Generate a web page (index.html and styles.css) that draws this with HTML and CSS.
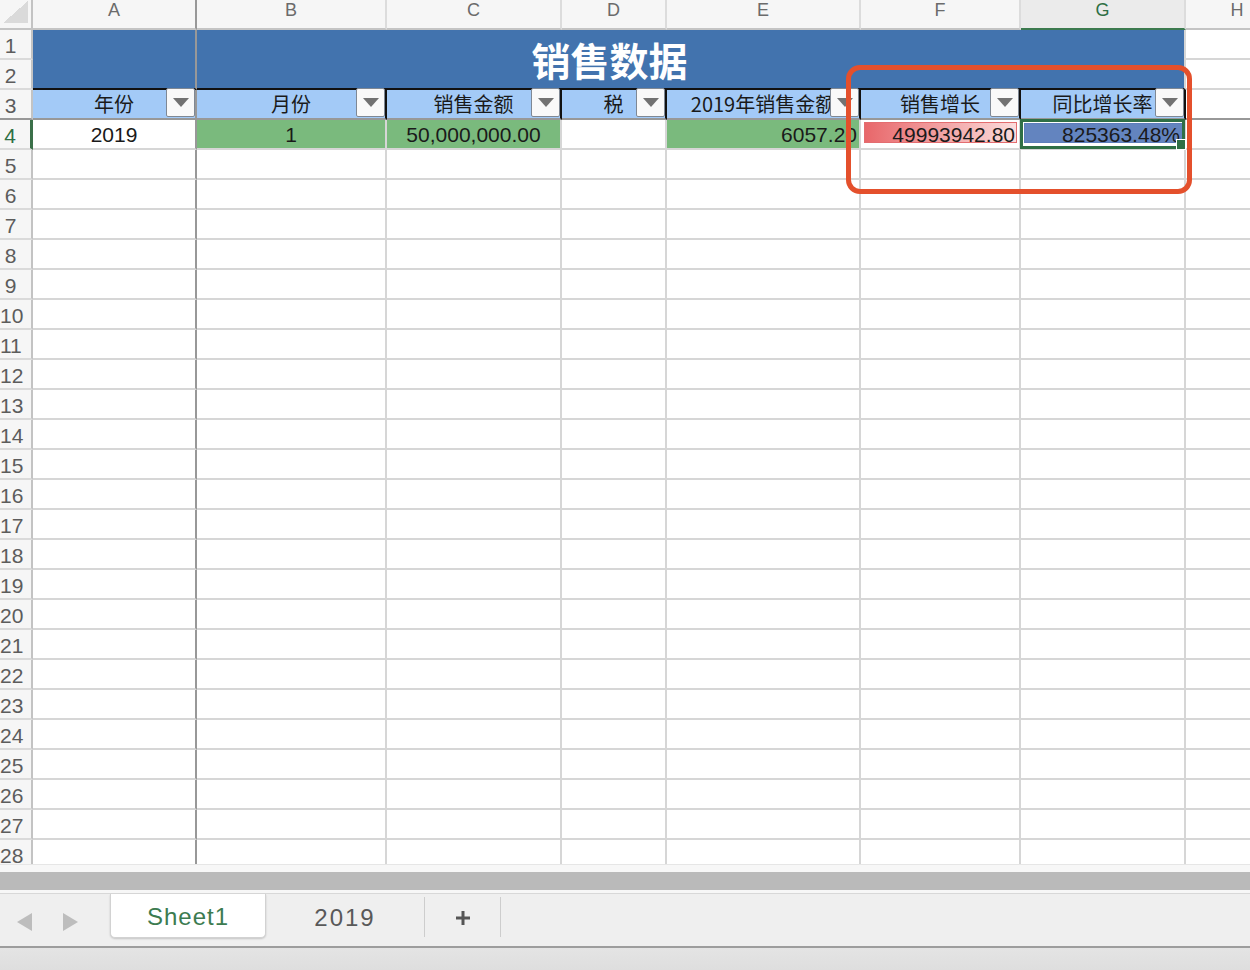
FILE: index.html
```html
<!DOCTYPE html>
<html lang="zh-CN">
<head>
  <meta charset="UTF-8">
  <meta name="viewport" content="width=device-width, initial-scale=1.0">
  <title>销售数据 - Sheet1</title>
  <link rel="stylesheet" href="styles.css">
</head>
<body>
  <div class="workbook">
    <div class="sheet">
      <!-- column letters -->
      <div class="row col-heads">
        <div class="corner"><span class="select-all"></span></div>
        <div class="col-head frozen">A</div>
        <div class="col-head">B</div>
        <div class="col-head">C</div>
        <div class="col-head">D</div>
        <div class="col-head">E</div>
        <div class="col-head">F</div>
        <div class="col-head active">G</div>
        <div class="col-head">H</div>
      </div>

      <!-- rows 1-2: merged title A1:G2 -->
      <div class="row title-rows">
        <div class="rh r1">1</div>
        <div class="rh r2">2</div>
        <div class="cell frozen title-a"></div>
        <div class="cell title">销售数据</div>
        <div class="cell h1"></div>
        <div class="cell h2"></div>
      </div>

      <!-- row 3: table header with filters -->
      <div class="row head-row">
        <div class="rh">3</div>
        <div class="cell th frozen">年份<span class="filter"></span></div>
        <div class="cell th">月份<span class="filter"></span></div>
        <div class="cell th">销售金额<span class="filter"></span></div>
        <div class="cell th">税<span class="filter"></span></div>
        <div class="cell th">2019年销售金额<span class="filter"></span></div>
        <div class="cell th">销售增长<span class="filter"></span></div>
        <div class="cell th">同比增长率<span class="filter"></span></div>
        <div class="cell"></div>
      </div>

      <!-- row 4: data -->
      <div class="row data-row">
        <div class="rh current">4</div>
        <div class="cell frozen center">2019</div>
        <div class="cell fill center">1</div>
        <div class="cell fill center">50,000,000.00</div>
        <div class="cell"></div>
        <div class="cell fill num">6057.20</div>
        <div class="cell"><div class="databar red">49993942.80</div></div>
        <div class="cell selected">
          <div class="databar blue">825363.48%</div>
          <span class="selection"></span>
        </div>
        <div class="cell"></div>
      </div>

      <div class="row"><div class="rh">5</div><div class="cell frozen"></div><div class="cell"></div><div class="cell"></div><div class="cell"></div><div class="cell"></div><div class="cell"></div><div class="cell"></div><div class="cell"></div></div>
      <div class="row"><div class="rh">6</div><div class="cell frozen"></div><div class="cell"></div><div class="cell"></div><div class="cell"></div><div class="cell"></div><div class="cell"></div><div class="cell"></div><div class="cell"></div></div>
      <div class="row"><div class="rh">7</div><div class="cell frozen"></div><div class="cell"></div><div class="cell"></div><div class="cell"></div><div class="cell"></div><div class="cell"></div><div class="cell"></div><div class="cell"></div></div>
      <div class="row"><div class="rh">8</div><div class="cell frozen"></div><div class="cell"></div><div class="cell"></div><div class="cell"></div><div class="cell"></div><div class="cell"></div><div class="cell"></div><div class="cell"></div></div>
      <div class="row"><div class="rh">9</div><div class="cell frozen"></div><div class="cell"></div><div class="cell"></div><div class="cell"></div><div class="cell"></div><div class="cell"></div><div class="cell"></div><div class="cell"></div></div>
      <div class="row"><div class="rh">10</div><div class="cell frozen"></div><div class="cell"></div><div class="cell"></div><div class="cell"></div><div class="cell"></div><div class="cell"></div><div class="cell"></div><div class="cell"></div></div>
      <div class="row"><div class="rh">11</div><div class="cell frozen"></div><div class="cell"></div><div class="cell"></div><div class="cell"></div><div class="cell"></div><div class="cell"></div><div class="cell"></div><div class="cell"></div></div>
      <div class="row"><div class="rh">12</div><div class="cell frozen"></div><div class="cell"></div><div class="cell"></div><div class="cell"></div><div class="cell"></div><div class="cell"></div><div class="cell"></div><div class="cell"></div></div>
      <div class="row"><div class="rh">13</div><div class="cell frozen"></div><div class="cell"></div><div class="cell"></div><div class="cell"></div><div class="cell"></div><div class="cell"></div><div class="cell"></div><div class="cell"></div></div>
      <div class="row"><div class="rh">14</div><div class="cell frozen"></div><div class="cell"></div><div class="cell"></div><div class="cell"></div><div class="cell"></div><div class="cell"></div><div class="cell"></div><div class="cell"></div></div>
      <div class="row"><div class="rh">15</div><div class="cell frozen"></div><div class="cell"></div><div class="cell"></div><div class="cell"></div><div class="cell"></div><div class="cell"></div><div class="cell"></div><div class="cell"></div></div>
      <div class="row"><div class="rh">16</div><div class="cell frozen"></div><div class="cell"></div><div class="cell"></div><div class="cell"></div><div class="cell"></div><div class="cell"></div><div class="cell"></div><div class="cell"></div></div>
      <div class="row"><div class="rh">17</div><div class="cell frozen"></div><div class="cell"></div><div class="cell"></div><div class="cell"></div><div class="cell"></div><div class="cell"></div><div class="cell"></div><div class="cell"></div></div>
      <div class="row"><div class="rh">18</div><div class="cell frozen"></div><div class="cell"></div><div class="cell"></div><div class="cell"></div><div class="cell"></div><div class="cell"></div><div class="cell"></div><div class="cell"></div></div>
      <div class="row"><div class="rh">19</div><div class="cell frozen"></div><div class="cell"></div><div class="cell"></div><div class="cell"></div><div class="cell"></div><div class="cell"></div><div class="cell"></div><div class="cell"></div></div>
      <div class="row"><div class="rh">20</div><div class="cell frozen"></div><div class="cell"></div><div class="cell"></div><div class="cell"></div><div class="cell"></div><div class="cell"></div><div class="cell"></div><div class="cell"></div></div>
      <div class="row"><div class="rh">21</div><div class="cell frozen"></div><div class="cell"></div><div class="cell"></div><div class="cell"></div><div class="cell"></div><div class="cell"></div><div class="cell"></div><div class="cell"></div></div>
      <div class="row"><div class="rh">22</div><div class="cell frozen"></div><div class="cell"></div><div class="cell"></div><div class="cell"></div><div class="cell"></div><div class="cell"></div><div class="cell"></div><div class="cell"></div></div>
      <div class="row"><div class="rh">23</div><div class="cell frozen"></div><div class="cell"></div><div class="cell"></div><div class="cell"></div><div class="cell"></div><div class="cell"></div><div class="cell"></div><div class="cell"></div></div>
      <div class="row"><div class="rh">24</div><div class="cell frozen"></div><div class="cell"></div><div class="cell"></div><div class="cell"></div><div class="cell"></div><div class="cell"></div><div class="cell"></div><div class="cell"></div></div>
      <div class="row"><div class="rh">25</div><div class="cell frozen"></div><div class="cell"></div><div class="cell"></div><div class="cell"></div><div class="cell"></div><div class="cell"></div><div class="cell"></div><div class="cell"></div></div>
      <div class="row"><div class="rh">26</div><div class="cell frozen"></div><div class="cell"></div><div class="cell"></div><div class="cell"></div><div class="cell"></div><div class="cell"></div><div class="cell"></div><div class="cell"></div></div>
      <div class="row"><div class="rh">27</div><div class="cell frozen"></div><div class="cell"></div><div class="cell"></div><div class="cell"></div><div class="cell"></div><div class="cell"></div><div class="cell"></div><div class="cell"></div></div>
      <div class="row"><div class="rh">28</div><div class="cell frozen"></div><div class="cell"></div><div class="cell"></div><div class="cell"></div><div class="cell"></div><div class="cell"></div><div class="cell"></div><div class="cell"></div></div>

      <!-- highlight drawn over F2:G5 -->
      <div class="callout"></div>
    </div>

    <div class="scroll-area">
      <div class="hscroll-thumb"></div>
    </div>

    <div class="tabbar">
      <div class="tab-nav">
        <svg class="nav-arrow" viewBox="0 0 15 18"><polygon points="15,0 15,18 0,9"/></svg>
        <svg class="nav-arrow" viewBox="0 0 15 18"><polygon points="0,0 15,9 0,18"/></svg>
      </div>
      <div class="tab active">Sheet1</div>
      <div class="tab divided">2019</div>
      <div class="tab divided add">
        <svg class="plus" viewBox="0 0 16 16"><line x1="8" y1="1" x2="8" y2="15"/><line x1="1" y1="8" x2="15" y2="8"/></svg>
      </div>
    </div>

    <div class="statusbar"></div>
  </div>
</body>
</html>
```

FILE: styles.css
```css
:root {
  --cols: 33px 164px 190px 175px 105px 194px 160px 165px 104px;
  --grid-line: #d6d6d6;
  --freeze-line: #989898;
  --header-bg: #f6f6f6;
  --title-blue: #4273ae;
  --head-blue: #a3caf7;
  --fill-green: #7aba7d;
  --excel-green: #2f6f45;
  --callout: #e4502c;
}

* {
  box-sizing: border-box;
}

body {
  margin: 0;
  font-family: "Liberation Sans", "Noto Sans CJK SC", sans-serif;
  color: #1a1a1a;
  background: #fff;
}

.workbook {
  width: 1250px;
  height: 970px;
  display: flex;
  flex-direction: column;
  overflow: hidden;
}

/* Grid */
.sheet {
  position: relative;
  height: 864px;
  flex-shrink: 0;
  overflow: hidden;
}

.row {
  display: grid;
  grid-template-columns: var(--cols);
  grid-auto-rows: 30px;
}

.cell {
  border-right: 2px solid var(--grid-line);
  border-bottom: 2px solid var(--grid-line);
  font-size: 21px;
  line-height: 30px;
  white-space: nowrap;
}

.cell.frozen {
  border-right-color: var(--freeze-line);
}

.rh {
  background: var(--header-bg);
  border-right: 2px solid #c3c3c3;
  border-bottom: 2px solid #dadada;
  padding-right: 10px;
  color: #5c5c5c;
  font-size: 21px;
  line-height: 31px;
  text-align: center;
  white-space: nowrap;
}

.rh.current {
  color: var(--excel-green);
  border-right: 3px solid #3b7049;
}

/* Column letters */
.corner {
  background: var(--header-bg);
  border-right: 2px solid #c3c3c3;
  border-bottom: 2px solid #c4c4c4;
  padding: 1px 0 0 3px;
}

.select-all {
  display: block;
  width: 25px;
  height: 22px;
  background: linear-gradient(to top left, #dadada 50%, transparent 50%);
}

.col-head {
  background: var(--header-bg);
  border-right: 2px solid #dcdcdc;
  border-bottom: 2px solid #c4c4c4;
  color: #6b6b6b;
  font-size: 18px;
  line-height: 20px;
  text-align: center;
  white-space: nowrap;
}

.col-head.frozen {
  border-right-color: var(--freeze-line);
}

.col-head.active {
  background: #ebebeb;
  color: var(--excel-green);
  border-bottom-color: #3c7a4f;
}

/* Rows 1-2 */
.title-rows {
  grid-template-rows: 30px 30px;
}

.title-rows .r1 { grid-column: 1; grid-row: 1; }
.title-rows .r2 { grid-column: 1; grid-row: 2; }
.title-rows .h1 { grid-column: 9; grid-row: 1; }
.title-rows .h2 { grid-column: 9; grid-row: 2; }

.title-a {
  grid-column: 2;
  grid-row: 1 / 3;
  background: var(--title-blue);
  border-bottom-color: #111;
}

.title {
  grid-column: 3 / 9;
  grid-row: 1 / 3;
  background: var(--title-blue);
  border-bottom-color: #111;
  /* centred across A:G, so offset by column A */
  padding-right: 162px;
  color: #fff;
  font-family: "Noto Sans CJK SC", sans-serif;
  font-size: 39px;
  font-weight: 700;
  line-height: 58px;
  text-align: center;
}

/* Row 3 */
.head-row > .rh,
.head-row > .cell {
  border-bottom-color: var(--freeze-line);
}

.th {
  position: relative;
  background: var(--head-blue);
  border-right-color: #111;
  font-family: "Noto Sans CJK SC", sans-serif;
  font-size: 20px;
  line-height: 28px;
  text-align: center;
}

.th.frozen {
  border-right-color: var(--freeze-line);
}

.filter {
  position: absolute;
  top: -2px;
  right: 0;
  width: 29px;
  height: 29px;
  display: flex;
  align-items: center;
  justify-content: center;
  background: #f9f9f9;
  border: 1px solid #7f8894;
  border-radius: 2px;
}

.filter::after {
  content: "";
  border-left: 8px solid transparent;
  border-right: 8px solid transparent;
  border-top: 9px solid #727272;
}

/* Row 4 */
.center {
  text-align: center;
}

.num {
  padding-right: 2px;
  text-align: right;
}

.fill {
  background: var(--fill-green);
}

.databar {
  border: 1px solid;
  line-height: 23px;
  text-align: right;
  white-space: nowrap;
}

.databar.red {
  height: 21px;
  margin: 2px 2px 0 3px;
  padding-right: 1px;
  border-color: #e36d70;
  background: linear-gradient(90deg, #e8676a, #fbdcdc);
}

.databar.blue {
  height: 20px;
  margin: 3px 1px 0 3px;
  padding-right: 2px;
  border-color: #5d7eba;
  background: #6384bf;
  line-height: 21px;
}

.selected {
  position: relative;
}

.selection {
  position: absolute;
  left: -1px;
  top: -1px;
  right: -1px;
  bottom: -1px;
  z-index: 2;
  border: 3px solid var(--excel-green);
}

.selection::after {
  content: "";
  position: absolute;
  right: -4px;
  bottom: -4px;
  width: 8px;
  height: 9px;
  background: var(--excel-green);
  border: 1px solid #fff;
}

.callout {
  position: absolute;
  left: 846px;
  top: 65px;
  width: 346px;
  height: 129px;
  z-index: 3;
  border: 5px solid var(--callout);
  border-radius: 14px;
}

/* Scrollbar and sheet tabs */
.scroll-area {
  height: 29px;
  flex-shrink: 0;
  padding-top: 7px;
  background: #f7f7f7;
  border-top: 1px solid #e6e6e6;
}

.hscroll-thumb {
  height: 18px;
  background: #bababa;
}

.tabbar {
  height: 53px;
  flex-shrink: 0;
  display: flex;
  align-items: flex-start;
  background: #efefef;
  border-top: 1px solid #d8d8d8;
}

.tab-nav {
  width: 110px;
  height: 52px;
  display: flex;
  align-items: center;
  gap: 31px;
  padding: 3px 0 0 17px;
}

.nav-arrow {
  width: 15px;
  height: 18px;
  fill: #bdbdbd;
}

.tab {
  display: flex;
  align-items: center;
  justify-content: center;
  color: #595959;
  font-size: 24px;
  letter-spacing: 1px;
}

.tab.active {
  width: 156px;
  height: 44px;
  padding-top: 3px;
  background: #fff;
  color: #3c7b50;
  border: 1px solid #d2d2d2;
  border-top: 0;
  border-radius: 0 0 5px 5px;
  box-shadow: 0 1px 2px rgba(0, 0, 0, 0.18);
}

.tab.divided {
  width: 159px;
  height: 40px;
  margin-top: 3px;
  padding-top: 2px;
  border-right: 1px solid #cdcdcd;
  letter-spacing: 2px;
}

.tab.add {
  width: 76px;
}

.plus {
  width: 16px;
  height: 16px;
  stroke: #555;
  stroke-width: 3;
}

.statusbar {
  flex: 1;
  background: linear-gradient(#e4e4e4, #dedede);
  border-top: 2px solid #9d9d9d;
}
```
